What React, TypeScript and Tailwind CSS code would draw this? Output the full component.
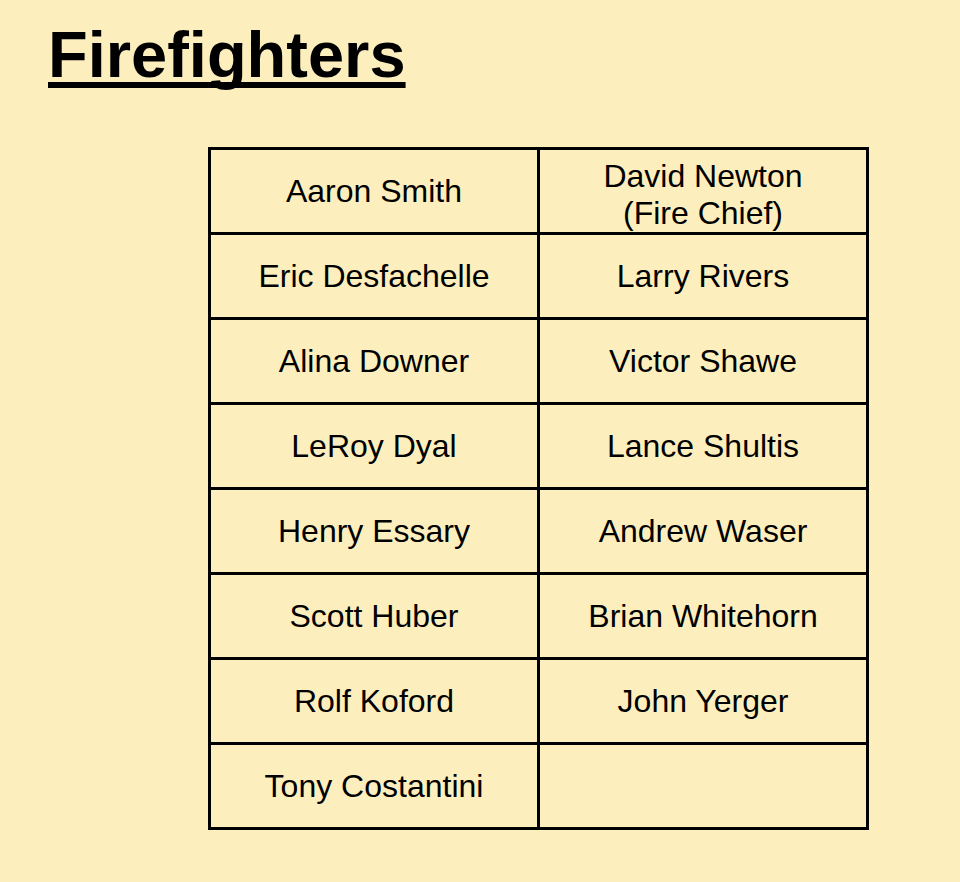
const rows: [string, string][] = [
  ["Aaron Smith", "David Newton\n(Fire Chief)"],
  ["Eric Desfachelle", "Larry Rivers"],
  ["Alina Downer", "Victor Shawe"],
  ["LeRoy Dyal", "Lance Shultis"],
  ["Henry Essary", "Andrew Waser"],
  ["Scott Huber", "Brian Whitehorn"],
  ["Rolf Koford", "John Yerger"],
  ["Tony Costantini", ""],
];

const Cell = ({ text }: { text: string }) => (
  <td
    className={
      "border-[3px] border-black w-[329px] h-[85px] px-0 text-center align-middle text-[32px] leading-[37px] text-black whitespace-pre-line " +
      (text.includes("\n") ? "pt-[8px] pb-0" : "py-0")
    }
  >
    {text}
  </td>
);

export default function App() {
  return (
    <div
      className="w-[960px] h-[882px] bg-[#fdefbd] overflow-hidden"
      style={{ fontFamily: '"Liberation Sans", Arial, sans-serif' }}
    >
      <h1 className="pt-[22px] pl-[48px] text-[65px] leading-none font-bold text-black underline decoration-[6px] underline-offset-[5px] [text-decoration-skip-ink:none]">
        Firefighters
      </h1>
      <div className="pl-[208px] pt-[60px]">
        <table className="border-collapse border-[3px] border-black">
          <tbody>
            {rows.map(([a, b], i) => (
              <tr key={a + i}>
                <Cell text={a} />
                <Cell text={b} />
              </tr>
            ))}
          </tbody>
        </table>
      </div>
    </div>
  );
}
